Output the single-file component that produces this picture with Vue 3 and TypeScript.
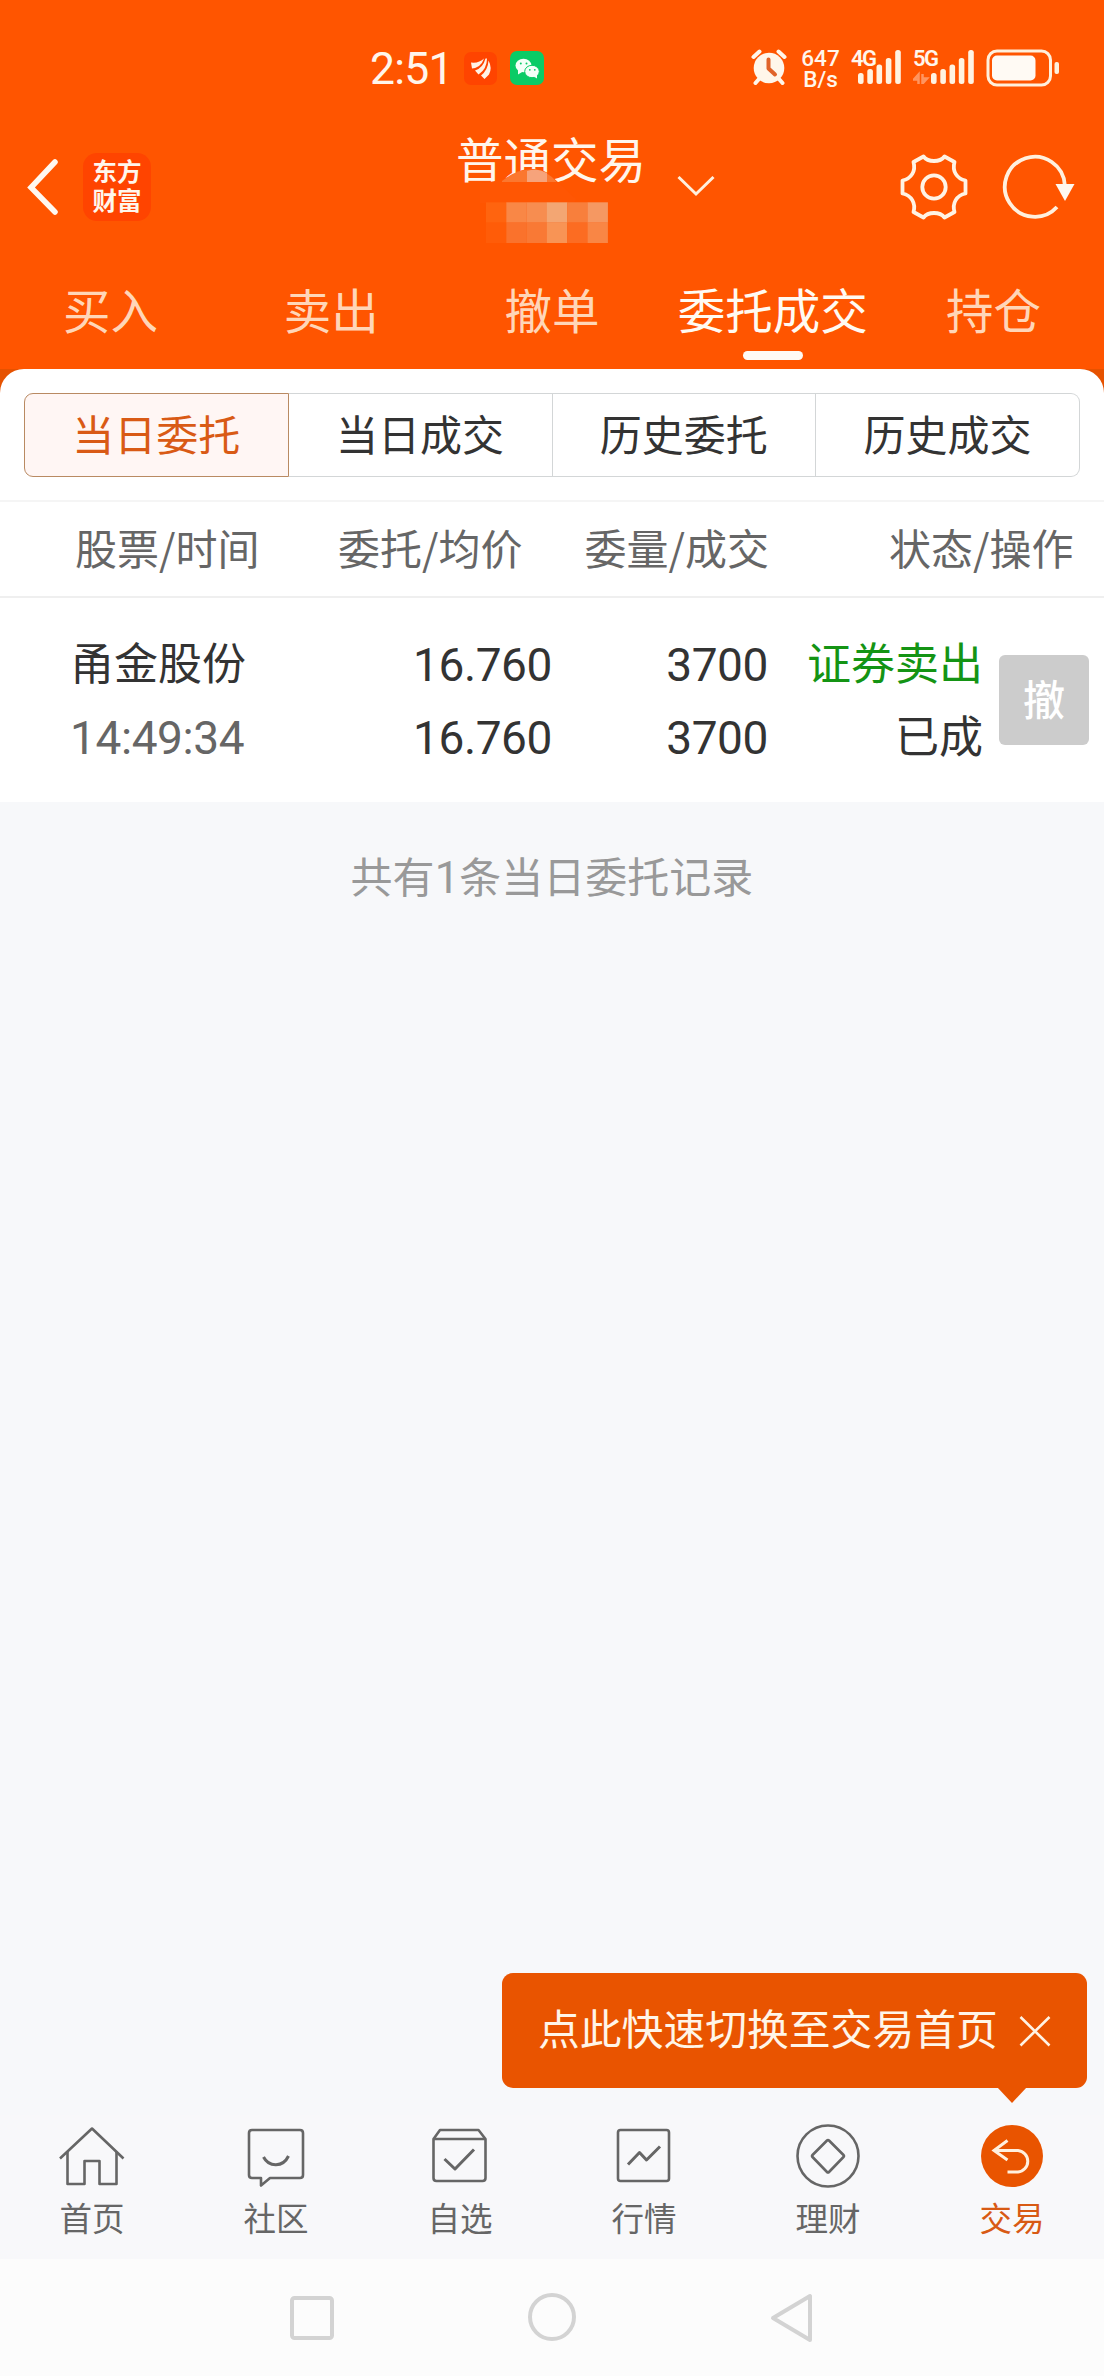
<script setup lang="ts">
import { ref } from 'vue'

interface Order {
  name: string
  time: string
  price: string
  average: string
  quantity: string
  filled: string
  side: string
  status: string
}

const tabs: string[] = ['买入', '卖出', '撤单', '委托成交', '持仓']
const activeTab = ref(3)

const segments: string[] = ['当日委托', '当日成交', '历史委托', '历史成交']
const activeSegment = ref(0)

const columns: string[] = ['股票/时间', '委托/均价', '委量/成交', '状态/操作']

const orders: Order[] = [
  {
    name: '甬金股份',
    time: '14:49:34',
    price: '16.760',
    average: '16.760',
    quantity: '3700',
    filled: '3700',
    side: '证券卖出',
    status: '已成',
  },
]

const navItems = [
  { key: 'home', label: '首页' },
  { key: 'community', label: '社区' },
  { key: 'watchlist', label: '自选' },
  { key: 'market', label: '行情' },
  { key: 'finance', label: '理财' },
  { key: 'trade', label: '交易' },
]
const activeNav = ref('trade')
const tipVisible = ref(true)

const signal = [
  { x: 0, h: 11 },
  { x: 9.3, h: 15 },
  { x: 18.5, h: 19.5 },
  { x: 27.8, h: 26 },
  { x: 37.2, h: 34 },
]

const mosaic = [
  ['#ff640f', '#f98746', '#f78d50', '#f3a673', '#f87f3c', '#f59862'],
  ['#ff5c08', '#fa722c', '#f97935', '#f89455', '#fc6c22', '#f98645'],
]
</script>

<template>
  <div class="screen">
    <header class="header">
      <div class="status">
        <span class="clock">2:51</span>
        <svg class="app-badge" width="33" height="33" viewBox="0 0 33 33">
          <rect width="33" height="33" rx="7" fill="#ff4400" />
          <path d="M7 10.5Q15 11.5 20 6.500Q17 15.500 8 16.500Z" fill="#fff3e6" />
          <path d="M11 18.500Q19 16 21.500 6.500L23 6.500Q23 17 14.500 22.500Z" fill="#fff3e6" />
          <path d="M17 23.500Q24 18 24.500 8.500Q28.500 16 25 22.500L20.500 27Z" fill="#fff3e6" />
        </svg>
        <svg class="chat-badge" width="34" height="34" viewBox="0 0 34 34">
          <rect width="34" height="34" rx="7" fill="#0acb66" />
          <ellipse cx="13.500" cy="14.500" rx="8" ry="6.800" fill="#f4fff8" />
          <path d="M8 19L8 23.500L13 20.500Z" fill="#f4fff8" />
          <ellipse cx="22" cy="20.500" rx="7.300" ry="6.200" fill="#f4fff8" stroke="#0acb66" stroke-width="1" />
          <path d="M23 25L27 27.500L27 23.500Z" fill="#f4fff8" />
          <circle cx="10.800" cy="12.500" r="1" fill="#0acb66" />
          <circle cx="16.500" cy="12.500" r="1" fill="#0acb66" />
          <circle cx="19.800" cy="18.800" r=".9" fill="#0acb66" />
          <circle cx="24.800" cy="18.800" r=".9" fill="#0acb66" />
        </svg>
        <svg class="alarm" width="36" height="36" viewBox="0 0 36 36">
          <circle cx="18" cy="19" r="15.300" fill="#fff6ea" />
          <path d="M2.500 8L8.500 2.500M33.500 8L27.500 2.500M8 30L4.500 34M28 30L31.500 34" stroke="#fff6ea" stroke-width="4" stroke-linecap="round" fill="none" />
          <path d="M17.500 10.500V19.500L24 25.500" stroke="#e0632a" stroke-width="4" stroke-linecap="round" stroke-linejoin="round" fill="none" />
        </svg>
        <div class="speed"><span>647</span><span>B/s</span></div>
        <div class="cell cell-4g">
          <svg width="43" height="34" viewBox="0 0 43 34">
            <rect v-for="b in signal" :key="b.x" :x="b.x" :y="34 - b.h" width="5.600" :height="b.h" rx="2.500" fill="#fff3e2" />
          </svg>
          <span>4G</span>
        </div>
        <div class="cell cell-5g">
          <svg width="61" height="34" viewBox="-18 0 61 34">
            <path d="M-12.500 34V24.500L-17 29.500H-13M-8.500 24V33.500L-4 28.500H-8" stroke="#ff9560" stroke-width="2.500" fill="none" />
            <rect v-for="b in signal" :key="b.x" :x="b.x" :y="34 - b.h" width="5.600" :height="b.h" rx="2.500" fill="#fff3e2" />
          </svg>
          <span>5G</span>
        </div>
        <svg class="battery" width="74" height="38" viewBox="0 0 74 38">
          <rect x="2" y="2" width="62.500" height="34" rx="9" fill="none" stroke="#fff0dc" stroke-width="3" />
          <rect x="6" y="6.500" width="43.500" height="25" rx="5" fill="#fffaf4" />
          <rect x="68.500" y="13" width="4.500" height="12" rx="2" fill="#fff0dc" />
        </svg>
      </div>

      <div class="title-bar">
        <svg class="back" width="34" height="58" viewBox="0 0 34 58">
          <path d="M29 4L5 29.500L29 54" fill="none" stroke="#fff8f0" stroke-width="5.500" stroke-linecap="round" stroke-linejoin="miter" />
        </svg>
        <div class="brand">东方<br />财富</div>
        <div class="account">
          <h1>普通交易</h1>
          <svg class="mask" width="150" height="80" viewBox="0 0 150 80">
            <path d="M0 14Q22 13 36 4Q52 -5 68 4L79 14L96 30Q96 34 90 34H0Z" fill="#ff5603" />
            <path d="M22 12Q44 -6 66 4Q73 8 77 13H22Z" fill="#fb772f" />
            <path d="M47 2Q57 -2 67 4V13H47Z" fill="#f6a37b" />
            <g v-for="(row, r) in mosaic" :key="r">
              <rect v-for="(c, i) in row" :key="i" :x="6 + i * 20.300" :y="33.300 + r * 20.300" width="20.400" height="20.400" :fill="c" />
            </g>
          </svg>
        </div>
        <svg class="chevron" width="40" height="24" viewBox="0 0 40 24">
          <path d="M2.500 3L20 20L37.500 3" fill="none" stroke="#fff0de" stroke-width="3" />
        </svg>
        <svg class="gear" width="70" height="70" viewBox="-35 -35 70 70">
          <path d="M-10.500 -30.500C-6 -24.500 6 -24.500 10.500 -30.500L20.500 -25C18 -16 22.500 -8.500 31.500 -6.500V6.500C22.500 8.500 18 16 20.500 25L10.500 30.500C6 24.500 -6 24.500 -10.500 30.500L-20.500 25C-18 16 -22.500 8.500 -31.500 6.500V-6.500C-22.500 -8.500 -18 -16 -20.500 -25Z" fill="none" stroke="#fff3e4" stroke-width="3.800" stroke-linejoin="round" />
          <circle r="11.700" fill="none" stroke="#fff3e4" stroke-width="3.800" />
        </svg>
        <svg class="refresh" width="76" height="68" viewBox="-34 -34 76 68">
          <path d="M29.800 -2A30 30 0 1 0 22 20" fill="none" stroke="#fff0de" stroke-width="3.800" />
          <path d="M20.500 -3H39.500L30 14Z" fill="#fff8f0" />
        </svg>
      </div>

      <nav class="tabs">
        <button v-for="(tab, i) in tabs" :key="tab" class="tab" :class="{ active: i === activeTab }" @click="activeTab = i">
          {{ tab }}
        </button>
      </nav>
    </header>

    <div class="panel-back">
      <section class="panel">
        <div class="segments">
          <button
            v-for="(segment, i) in segments"
            :key="segment"
            class="segment"
            :class="{ active: i === activeSegment }"
            @click="activeSegment = i"
          >
            {{ segment }}
          </button>
        </div>
        <div class="columns">
          <span v-for="column in columns" :key="column">{{ column }}</span>
        </div>
        <div v-for="order in orders" :key="order.time" class="order">
          <div class="col stock"><span>{{ order.name }}</span><span class="num time">{{ order.time }}</span></div>
          <div class="col price"><span class="num">{{ order.price }}</span><span class="num">{{ order.average }}</span></div>
          <div class="col amount"><span class="num">{{ order.quantity }}</span><span class="num">{{ order.filled }}</span></div>
          <div class="col state"><span class="sell">{{ order.side }}</span><span>{{ order.status }}</span></div>
          <button class="cancel">撤</button>
        </div>
      </section>
    </div>

    <main class="content">
      <p class="summary">共有<span class="count">{{ orders.length }}</span>条当日委托记录</p>
      <div v-if="tipVisible" class="tip">
        <span>点此快速切换至交易首页</span>
        <svg width="32" height="32" viewBox="0 0 32 32" @click="tipVisible = false">
          <path d="M1.500 2L30.500 30.500M30.500 2L1.500 30.500" stroke="#fff3e4" stroke-width="2.600" />
        </svg>
      </div>
    </main>

    <nav class="bottom-nav">
      <button v-for="item in navItems" :key="item.key" class="nav-item" :class="{ active: item.key === activeNav }" @click="activeNav = item.key">
        <svg width="72" height="72" viewBox="-36 -36 72 72" fill="none" stroke="#666" stroke-width="2.600" stroke-linejoin="round">
          <g v-if="item.key === 'home'">
            <path d="M-32 2.500L0 -27.500L31.500 2.500" />
            <path d="M-24.500 -4V28H-7.500V5H7.500V28H24.500V-4" />
          </g>
          <g v-else-if="item.key === 'community'">
            <path d="M-24 -26H24Q27 -26 27 -23V19Q27 22 24 22H-6L-15 29.500V22H-24Q-27 22 -27 19V-23Q-27 -26 -24 -26Z" />
            <path d="M-12.500 1C-7 11.500 7 11.500 12.500 0" stroke-width="3" />
          </g>
          <g v-else-if="item.key === 'watchlist'">
            <path d="M-26.500 -17L-20 -26H18.500L25.500 -17V22Q25.500 25 22.500 25H-23.500Q-26.500 25 -26.500 22ZM-26.500 -17H25.500" />
            <path d="M-15.500 3L-5 13L14 -6.500" stroke-width="3" />
          </g>
          <g v-else-if="item.key === 'market'">
            <rect x="-26" y="-26" width="51" height="51" rx="2.500" />
            <path d="M-16 8.500L-4.500 -3.500L2.500 4L16 -9.500" stroke-width="3" />
          </g>
          <g v-else-if="item.key === 'finance'">
            <circle r="30.500" />
            <path d="M-1 -15.500Q0 -16.500 1 -15.500L15.500 -1Q16.500 0 15.500 1L1 16Q0 17 -1 16L-15.500 1Q-16.500 0 -15.500 -1Z" />
          </g>
          <g v-else>
            <circle r="31" fill="#e95400" stroke="none" />
            <path d="M-4.500 -15.500L-18 -5.500L-4.500 4M-18 -5.500H6A10.800 10.800 0 0 1 6 16H-4.500" stroke="#fff0de" stroke-width="3" stroke-linejoin="miter" />
          </g>
        </svg>
        <span>{{ item.label }}</span>
      </button>
    </nav>

    <footer class="system-nav">
      <svg width="48" height="52" viewBox="0 0 48 52"><rect x="4" y="6" width="40" height="40" rx="2.500" /></svg>
      <svg width="48" height="52" viewBox="0 0 48 52"><circle cx="24" cy="25" r="22" /></svg>
      <svg width="48" height="52" viewBox="0 0 48 52"><path d="M5 26L42 4V48Z" /></svg>
    </footer>
  </div>
</template>

<style>
body {
  margin: 0;
}
</style>

<style scoped>
.screen {
  width: 1104px;
  height: 2376px;
  display: flex;
  flex-direction: column;
  overflow: hidden;
  background: #f7f8fa;
  color: #333;
  font-family: "Noto Sans CJK SC", sans-serif;
}
svg {
  display: block;
  flex: none;
}
button {
  font: inherit;
  color: inherit;
  border: 0;
  padding: 0;
  margin: 0;
  background: none;
}
.header {
  height: 369px;
  background: #ff5500;
  color: #fff6ec;
}
.status {
  height: 120px;
  display: flex;
  align-items: flex-start;
  font-family: Roboto, sans-serif;
}
.clock {
  width: 94px;
  margin: 42px 0 0 370px;
  font-size: 44.500px;
  line-height: 54px;
  letter-spacing: -0.800px;
  white-space: nowrap;
}
.app-badge {
  margin: 52px 13px 0 0;
}
.chat-badge {
  margin-top: 51px;
}
.alarm {
  margin: 49px 0 0 207px;
}
.speed {
  width: 37px;
  margin: 48px 0 0 15px;
  display: flex;
  flex-direction: column;
  align-items: center;
  font-size: 22.500px;
  line-height: 21px;
  font-weight: 500;
}
.cell {
  position: relative;
  margin-top: 50px;
}
.cell span {
  position: absolute;
  top: -3px;
  font-size: 22px;
  line-height: 24px;
  font-weight: 600;
  letter-spacing: -1.500px;
}
.cell-4g {
  margin-left: 19px;
}
.cell-4g span {
  left: -7px;
}
.cell-5g {
  margin-left: 12px;
}
.cell-5g span {
  left: 0;
}
.battery {
  margin: 49px 0 0 12px;
}
.title-bar {
  height: 140px;
  display: flex;
  align-items: flex-start;
}
.back {
  margin: 38px 0 0 26px;
}
.brand {
  width: 68px;
  height: 68px;
  margin: 33px 0 0 23px;
  border-radius: 14px;
  background: #ff4400;
  text-align: center;
  font-size: 24.5px;
  line-height: 29px;
  font-weight: 700;
  padding-top: 3px;
  box-sizing: border-box;
}
.account {
  position: relative;
  width: 192px;
  margin-left: 304px;
}
.account h1 {
  margin: 8px 0 0 1px;
  font-size: 47.5px;
  line-height: 60px;
  font-weight: 400;
  white-space: nowrap;
}
.mask {
  position: absolute;
  left: 25px;
  top: 49px;
}
.chevron {
  margin: 54px 0 0 29px;
}
.gear {
  margin: 32px 0 0 183px;
}
.refresh {
  margin: 33px 0 0 32px;
}
.tabs {
  height: 109px;
  display: flex;
}
.tab {
  flex: 1;
  display: flex;
  flex-direction: column;
  align-items: center;
  padding-top: 16px;
  font-size: 47.5px;
  line-height: 66px;
  white-space: nowrap;
  color: #ffd6b8;
}
.tab.active {
  color: #fffaf2;
}
.tab.active::after {
  content: "";
  width: 60px;
  height: 9px;
  margin-top: 9px;
  border-radius: 5px;
  background: #fffaf4;
}
.panel-back {
  background: linear-gradient(#e65200 0 24px, #fff 24px);
}
.panel {
  height: 433px;
  border-radius: 24px 24px 0 0;
  background: #fff;
}
.segments {
  display: flex;
  height: 84px;
  padding: 24px 24px 23px;
}
.segment {
  flex: 1;
  height: 84px;
  box-sizing: border-box;
  border: 1px solid #d3d6d7;
  border-left-width: 0;
  padding-bottom: 5px;
  font-size: 42px;
  line-height: 76px;
}
.segment:first-child {
  border-left-width: 1px;
  border-radius: 9px 0 0 9px;
}
.segment:last-child {
  border-radius: 0 9px 9px 0;
}
.segment.active {
  border-color: #b98a62;
  background: #fff6f4;
  color: #d95a15;
}
.columns {
  height: 98px;
  box-sizing: border-box;
  border-top: 2px solid #f5f5f5;
  border-bottom: 2px solid #efefef;
  display: grid;
  grid-template-columns: 263px 246.5px 304.5px 184px;
  padding-left: 75px;
  font-size: 42px;
  line-height: 90px;
  color: #666;
  white-space: nowrap;
}
.order {
  display: flex;
  padding: 25px 0 0 70px;
  height: 179px;
  font-size: 44px;
  line-height: 73px;
  white-space: nowrap;
}
.col {
  display: flex;
  flex-direction: column;
  align-items: flex-end;
  margin-top: 2px;
}
.num {
  font-family: Roboto, sans-serif;
  font-size: 46px;
  letter-spacing: -0.400px;
  padding-top: 3.500px;
  margin-bottom: -3.500px;
}
.stock {
  width: 182px;
  align-items: flex-start;
}
.time {
  color: #666;
}
.price {
  width: 300px;
}
.amount {
  width: 216px;
}
.state {
  width: 215px;
}
.sell {
  color: #149414;
}
.cancel {
  width: 90px;
  height: 90px;
  margin: 32px 0 0 16px;
  padding-bottom: 5px;
  border-radius: 6px;
  background: #ccc;
  color: #fff;
  font-size: 42px;
  line-height: 84px;
  font-weight: 500;
}
.content {
  flex: 1;
  display: flex;
  flex-direction: column;
  justify-content: space-between;
}
.summary {
  margin: 42px 0 0;
  text-align: center;
  font-size: 42px;
  line-height: 62px;
  color: #999;
}
.count {
  font-family: Roboto, sans-serif;
  font-size: 44px;
}
.tip {
  position: relative;
  align-self: flex-end;
  width: 585px;
  height: 115px;
  box-sizing: border-box;
  margin: 0 17px 27px 0;
  padding: 0 36px;
  border-radius: 11px;
  background: #e95400;
  color: #fff5e8;
  display: flex;
  align-items: center;
  justify-content: space-between;
  font-size: 41.800px;
  line-height: 60px;
  white-space: nowrap;
}
.tip span {
  padding-bottom: 7px;
}
.tip::after {
  content: "";
  position: absolute;
  right: 60px;
  top: 114px;
  border: 15.500px solid transparent;
  border-top: 16px solid #e95400;
  border-bottom: 0;
}
.bottom-nav {
  height: 144px;
  display: flex;
  background: #f8f8fa;
}
.nav-item {
  flex: 1;
  display: flex;
  flex-direction: column;
  align-items: center;
  padding-top: 5px;
  font-size: 32.500px;
  line-height: 46px;
  color: #666;
}
.nav-item span {
  margin-top: 2px;
}
.nav-item.active {
  color: #d85a14;
}
.system-nav {
  height: 117px;
  box-sizing: border-box;
  padding-top: 33px;
  display: flex;
  justify-content: center;
  gap: 192px;
  background: #fcfcfc;
}
.system-nav svg {
  fill: none;
  stroke: #d3d3d3;
  stroke-width: 4;
  stroke-linejoin: round;
}
</style>
